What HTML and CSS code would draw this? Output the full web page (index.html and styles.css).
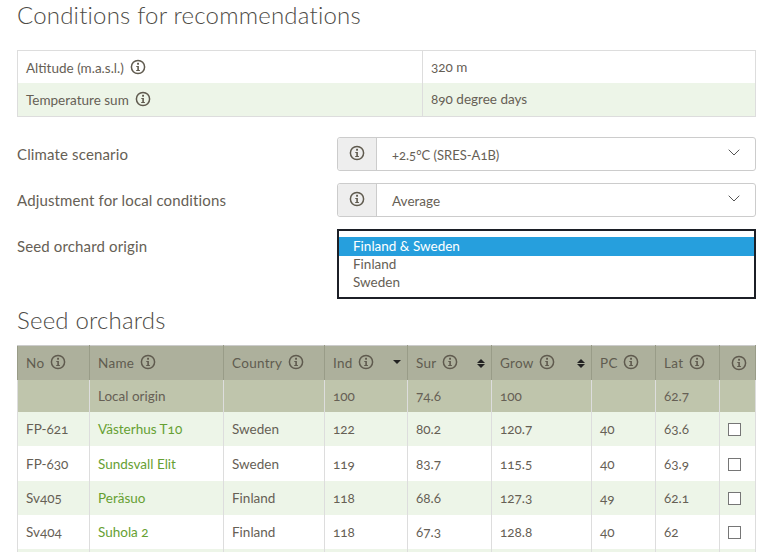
FILE: index.html
```html
<!DOCTYPE html>
<html lang="en">
<head>
    <meta charset="UTF-8">
    <title>Conditions for recommendations</title>
    <link rel="stylesheet" href="styles.css">
</head>
<body>
    <svg class="defs" width="0" height="0">
        <symbol id="info" viewBox="0 0 16 16">
            <circle cx="8" cy="8" r="6.6" fill="none" stroke="currentColor" stroke-width="1.5"/>
            <rect x="7.1" y="3.8" width="1.9" height="1.9" fill="currentColor"/>
            <path d="M6.3 7h2.6v4.1h1v1H6.2v-1h1.1V8H6.3z" fill="currentColor"/>
        </symbol>
    </svg>

    <h2 class="title">Conditions for recommendations</h2>
    <table class="conditions">
        <tr class="first"><td class="cond-label">Altitude (m.a.s.l.) <svg class="info"><use href="#info"/></svg></td><td>320 m</td></tr>
        <tr class="green"><td class="cond-label">Temperature sum <svg class="info"><use href="#info"/></svg></td><td>890 degree days</td></tr>
    </table>

    <div class="form-row">
        <label>Climate scenario</label>
        <div class="select">
            <span class="addon"><svg class="info"><use href="#info"/></svg></span>
            <span class="value small">+2.5°C (SRES-A1B)</span>
            <svg class="chevron" viewBox="0 0 12 7"><path d="M.7.7 6 6l5.3-5.3" fill="none" stroke="currentColor"/></svg>
        </div>
    </div>
    <div class="form-row">
        <label>Adjustment for local conditions</label>
        <div class="select">
            <span class="addon"><svg class="info"><use href="#info"/></svg></span>
            <span class="value">Average</span>
            <svg class="chevron" viewBox="0 0 12 7"><path d="M.7.7 6 6l5.3-5.3" fill="none" stroke="currentColor"/></svg>
        </div>
    </div>
    <div class="form-row">
        <label>Seed orchard origin</label>
        <div class="listbox">
            <div class="option selected">Finland &amp; Sweden</div>
            <div class="option">Finland</div>
            <div class="option">Sweden</div>
        </div>
    </div>

    <h2 class="title orchards-title">Seed orchards</h2>
    <table class="orchards">
        <colgroup>
            <col class="c-no"><col class="c-name"><col class="c-country"><col class="c-ind"><col class="c-sur"><col class="c-grow"><col class="c-pc"><col class="c-lat"><col class="c-check">
        </colgroup>
        <thead>
            <tr>
                <th>No <svg class="info"><use href="#info"/></svg></th>
                <th>Name <svg class="info"><use href="#info"/></svg></th>
                <th>Country <svg class="info"><use href="#info"/></svg></th>
                <th>Ind <svg class="info"><use href="#info"/></svg><span class="sort down"></span></th>
                <th>Sur <svg class="info"><use href="#info"/></svg><span class="sort both"></span></th>
                <th>Grow <svg class="info"><use href="#info"/></svg><span class="sort both"></span></th>
                <th>PC <svg class="info"><use href="#info"/></svg></th>
                <th>Lat <svg class="info"><use href="#info"/></svg></th>
                <th class="center"><svg class="info"><use href="#info"/></svg></th>
            </tr>
        </thead>
        <tbody>
            <tr class="local"><td></td><td>Local origin</td><td></td><td>100</td><td>74.6</td><td>100</td><td></td><td>62.7</td><td></td></tr>
            <tr class="green"><td>FP-621</td><td><a href="#">Västerhus T10</a></td><td>Sweden</td><td>122</td><td>80.2</td><td>120.7</td><td>40</td><td>63.6</td><td><span class="check"></span></td></tr>
            <tr class="tall"><td>FP-630</td><td><a href="#">Sundsvall Elit</a></td><td>Sweden</td><td>119</td><td>83.7</td><td>115.5</td><td>40</td><td>63.9</td><td><span class="check"></span></td></tr>
            <tr class="green"><td>Sv405</td><td><a href="#">Peräsuo</a></td><td>Finland</td><td>118</td><td>68.6</td><td>127.3</td><td>49</td><td>62.1</td><td><span class="check"></span></td></tr>
            <tr><td>Sv404</td><td><a href="#">Suhola 2</a></td><td>Finland</td><td>118</td><td>67.3</td><td>128.8</td><td>40</td><td>62</td><td><span class="check"></span></td></tr>
            <tr class="green"><td>&nbsp;</td><td></td><td></td><td></td><td></td><td></td><td></td><td></td><td></td></tr>
        </tbody>
    </table>
</body>
</html>
```

FILE: styles.css
```css
html { overflow: hidden; height: 100%; }
body {
    margin: 0;
    padding: 0 27px 0 17px;
    height: 552px;
    overflow: hidden;
    font-family: Lato, "Open Sans", sans-serif;
    font-size: 13.5px;
    font-variant-numeric: oldstyle-nums;
    color: #666055;
}
.defs { position: absolute; }
.title {
    margin: 0;
    height: 30px;
    font-size: 24px;
    line-height: 30px;
    font-weight: 300;
    letter-spacing: 0.2px;
    color: #4d4b46;
}
.info { width: 16px; height: 16px; vertical-align: -2px; color: #5f5a4e; margin-left: 3px; }

.conditions {
    width: 739px;
    margin-top: 20px;
    border-collapse: collapse;
    border: 1px solid #ddd;
    table-layout: fixed;
}
.conditions td { height: 32px; padding: 0 8px 1px; }
.conditions .first td { height: 32px; padding-bottom: 0; }
.conditions td.cond-label { width: 388px; border-right: 1px solid #ddd; }
.green { background: #edf5e8; }

.form-row { display: flex; margin-top: 12px; }
.conditions + .form-row { margin-top: 20px; }
.form-row label {
    width: 320px;
    height: 33px;
    padding-top: 1px;
    line-height: 33px;
    font-size: 15px;
    letter-spacing: 0.14px;
}
.select {
    flex: 1;
    display: flex;
    align-items: center;
    height: 34px;
    box-sizing: border-box;
    border: 1px solid #ccc;
    border-radius: 3px;
}
.addon {
    width: 39px;
    height: 100%;
    display: flex;
    align-items: center;
    justify-content: center;
    padding-bottom: 3px;
    box-sizing: border-box;
    background: #eee;
    border-right: 1px solid #ccc;
    border-radius: 3px 0 0 3px;
}
.addon .info { margin: 0; }
.value { flex: 1; padding: 2px 0 0 15px; }
.value.small { font-size: 13px; }
.chevron { width: 12px; height: 7px; margin: 0 15px 4px 0; color: #555; }

.listbox {
    flex: 1;
    height: 70px;
    box-sizing: border-box;
    padding-top: 6px;
    border: 2px solid #1c1f26;
    background: #fff;
}
.option { height: 18px; line-height: 17px; padding-left: 14px; }
.option.selected { height: 19px; line-height: 18px; background: #269fdd; color: #fff; }

.orchards-title { margin-top: 6px; }
.orchards {
    width: 738px;
    margin-top: 10px;
    border-collapse: collapse;
    table-layout: fixed;
}
.c-no { width: 72px; }
.c-name { width: 134px; }
.c-country { width: 101px; }
.c-ind { width: 83px; }
.c-sur { width: 84px; }
.c-grow { width: 100px; }
.c-pc { width: 64px; }
.c-lat { width: 64px; }
.c-check { width: 36px; }
.orchards th, .orchards td {
    padding: 0 8px;
    text-align: left;
    font-weight: 400;
    border-left: 1px solid #ddd;
    border-right: 1px solid #ddd;
}
.orchards th {
    position: relative;
    height: 33px;
    padding-bottom: 1px;
    background: #adb09c;
    border-color: #999c88;
    border-top: 1px solid #ccc;
    white-space: nowrap;
    letter-spacing: 0.3px;
    color: #605c50;
}
.orchards td { height: 34px; }
.orchards tr.tall td { height: 35px; }
.orchards tr.local td { height: 32px; background: #bfc5ac; }
.orchards .center { text-align: center; padding: 0; }
.orchards a { color: #66a032; text-decoration: none; }
.orchards .info { margin-left: 2px; }

.sort { position: absolute; right: 6px; top: 13px; }
.sort::before, .sort::after {
    content: "";
    display: block;
    border-left: 4px solid transparent;
    border-right: 4px solid transparent;
}
.sort.down::before { margin-top: 1px; border-top: 4px solid #222; }
.sort.both::before { border-bottom: 4px solid #222; margin-bottom: 1px; }
.sort.both::after { border-top: 4px solid #222; }

.check {
    display: inline-block;
    width: 11px;
    height: 11px;
    vertical-align: -2px;
    border: 1px solid #767676;
    background: #fff;
}
```
